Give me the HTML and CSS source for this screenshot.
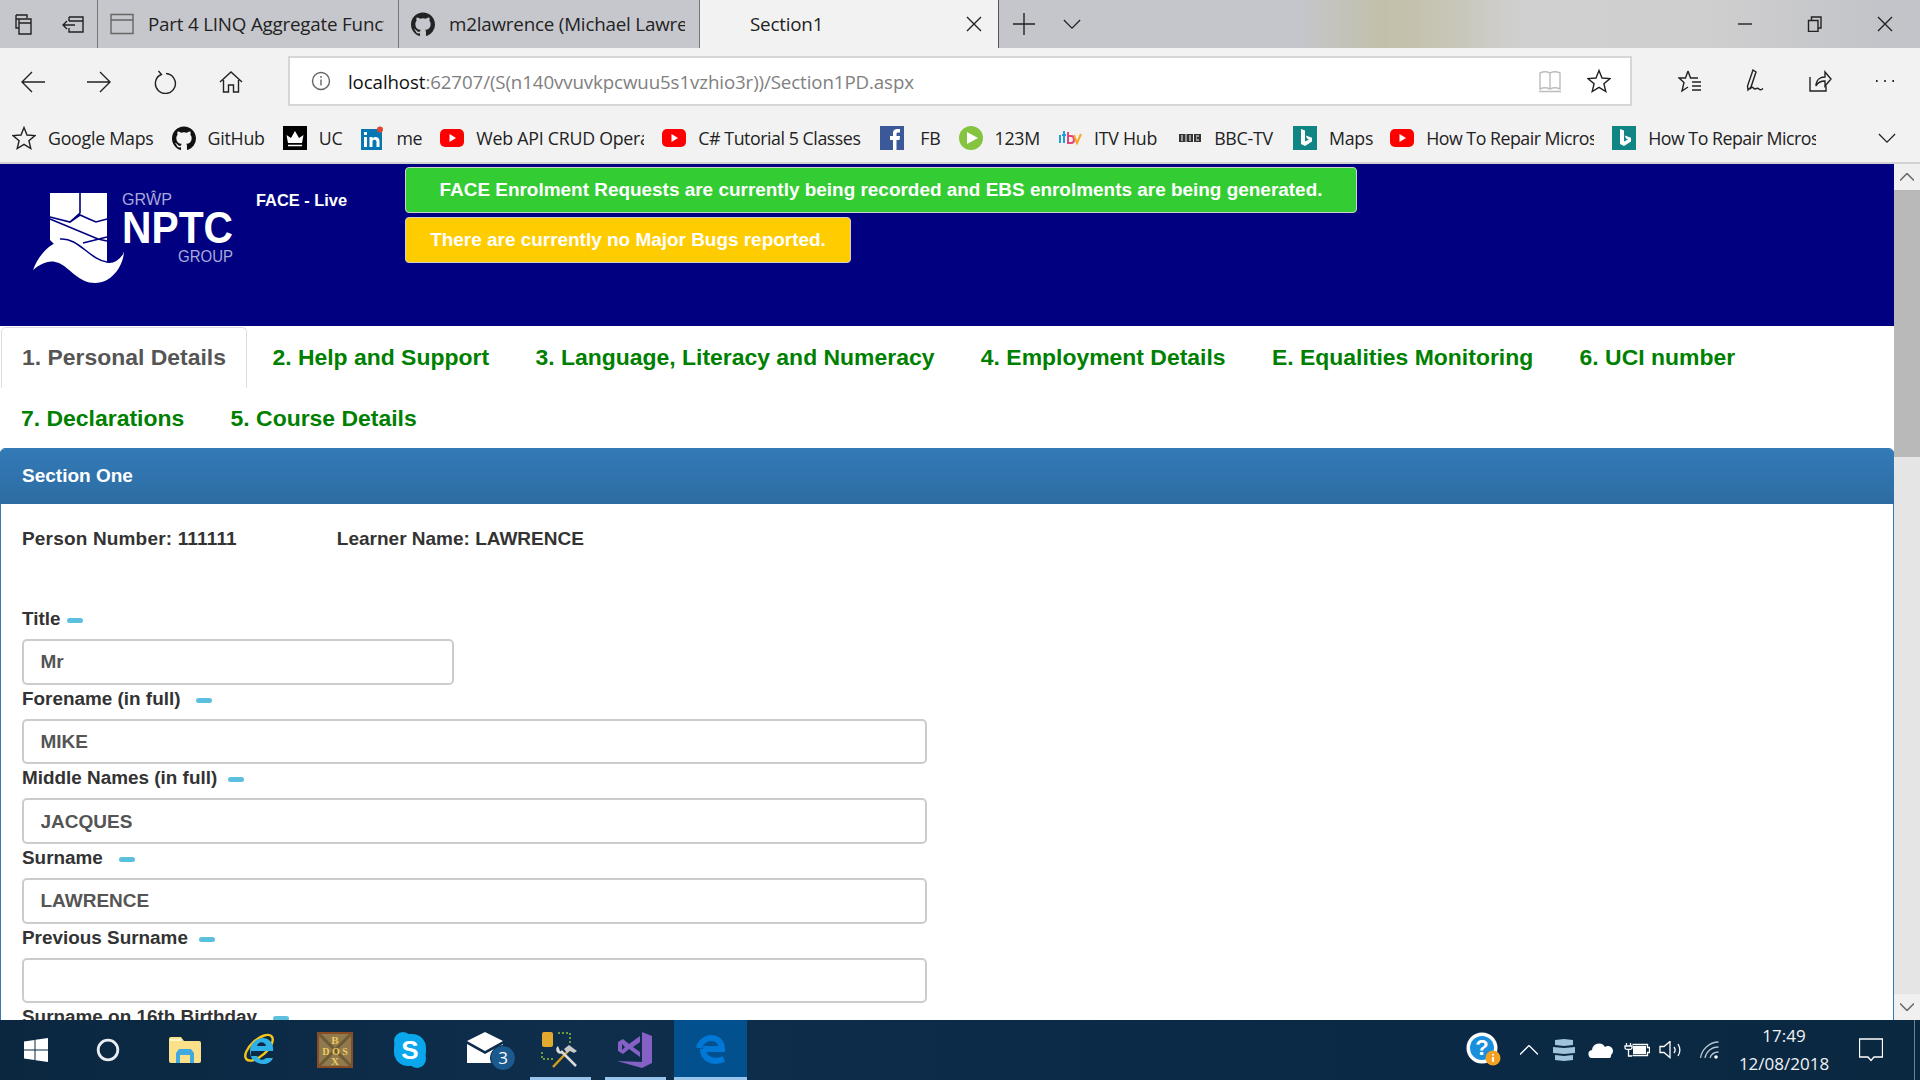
FILE: index.html
```html
<!DOCTYPE html>
<html lang="en">
<head>
<meta charset="utf-8">
<title>Section1</title>
<link rel="stylesheet" href="styles.css">
</head>
<body>
<svg class="defs" width="0" height="0" aria-hidden="true">
  <symbol id="octo" viewBox="0 0 24 24"><path d="M12 .5C5.37.5 0 5.87 0 12.5c0 5.3 3.44 9.8 8.2 11.39.6.11.82-.26.82-.58v-2.03c-3.34.73-4.04-1.61-4.04-1.61-.55-1.39-1.33-1.76-1.33-1.76-1.09-.74.08-.73.08-.73 1.2.09 1.84 1.24 1.84 1.24 1.07 1.83 2.81 1.3 3.49 1 .11-.78.42-1.31.76-1.61-2.67-.3-5.47-1.33-5.47-5.93 0-1.31.47-2.38 1.24-3.22-.14-.3-.54-1.52.1-3.18 0 0 1.01-.32 3.3 1.23a11.5 11.5 0 016 0c2.29-1.55 3.3-1.23 3.3-1.23.64 1.66.24 2.88.12 3.18a4.65 4.65 0 011.23 3.22c0 4.61-2.81 5.63-5.48 5.92.42.36.81 1.1.81 2.22v3.29c0 .32.21.7.82.58A12.01 12.01 0 0024 12.5C24 5.87 18.63.5 12 .5z"/></symbol>
  <symbol id="yt" viewBox="0 0 24 24"><rect x="0" y="3" width="24" height="18" rx="5" fill="#f00"/><path d="M9.500 8v8l6.500-4z" fill="#fff"/></symbol>
  <symbol id="bing" viewBox="0 0 24 24"><rect width="24" height="24" fill="#108583"/><path d="M8 3l4 1.500v11l4-2-2-1-1.200-3 6.200 2.200v3.800L12 20l-4-2z" fill="#fff"/></symbol>
</svg>

<div class="screen">
  <header class="tabbar">
    <div class="tabtools">
      <svg class="ic24" viewBox="0 0 24 24"><path d="M4 3h11v3M4 3v13h3M7 7h12v15H7zM4 7h3M7 11h12" class="ln"/></svg>
      <svg class="ic24" viewBox="0 0 24 24"><path d="M8 5h14v15H8v-4M8 9V5M8 9h14M14 13H2M6 9l-4 4 4 4" class="ln"/></svg>
    </div>
    <div class="btab">
      <svg class="ic24" viewBox="0 0 24 24"><path d="M1 2.500h22v19H1zM1 8h22" class="ln ln-grey"/></svg>
      <span class="tabtxt">Part 4 LINQ Aggregate Function</span>
    </div>
    <div class="btab">
      <svg class="ic24 octo-tab"><use href="#octo"/></svg>
      <span class="tabtxt">m2lawrence (Michael Lawrence)</span>
    </div>
    <div class="btab btab-on">
      <span class="tabtxt">Section1</span>
      <svg class="ic16" viewBox="0 0 16 16"><path d="M1 1l14 14M15 1L1 15" class="ln"/></svg>
    </div>
    <svg class="ic-plus" viewBox="0 0 22 22"><path d="M11 0v22M0 11h22" class="ln"/></svg>
    <svg class="ic-chev" viewBox="0 0 20 12"><path d="M1 1l9 9 9-9" class="ln"/></svg>
    <div class="winbtns">
      <svg class="ic16" viewBox="0 0 16 16"><path d="M1 8h14" class="ln"/></svg>
      <svg class="ic16" viewBox="0 0 16 16"><path d="M1.500 4.500h9.500v11H1.500zM4.500 4.500V1h9.500v11H11" class="ln"/></svg>
      <svg class="ic16" viewBox="0 0 16 16"><path d="M1 1l14 14M15 1L1 15" class="ln"/></svg>
    </div>
  </header>

  <div class="toolbar">
    <nav class="navbtns">
      <svg class="ic24" viewBox="0 0 24 24"><path d="M24 12H1M11 2L1 12l10 10" class="ln"/></svg>
      <svg class="ic24" viewBox="0 0 24 24"><path d="M0 12h23M13 2l10 10-10 10" class="ln"/></svg>
      <svg class="ic24" viewBox="0 0 24 24"><path d="M8 4.500A10 10 0 1 0 13 3.500M5.500 1L8.500 4.500 4 7" class="ln"/></svg>
      <svg class="ic24" viewBox="0 0 24 24"><path d="M1 12L12 2l11 10M4.500 10v12h5v-7h5v7h5V10" class="ln"/></svg>
    </nav>
    <div class="addr">
      <svg class="ic20" viewBox="0 0 20 20"><circle cx="10" cy="10" r="8.500" class="ln ln-grey"/><path d="M10 8.500v6M10 5v2" class="ln ln-grey"/></svg>
      <span class="url"><span class="url-host">localhost</span>:62707/(S(n140vvuvkpcwuu5s1vzhio3r))/Section1PD.aspx</span>
      <svg class="ic24" viewBox="0 0 24 24"><path d="M2 4c3-1.500 7-1.500 10 0 3-1.500 7-1.500 10 0v16c-3-1.500-7-1.500-10 0-3-1.500-7-1.500-10 0zM12 4v16M1 22.500h22" class="ln ln-pale"/></svg>
      <svg class="ic24 star" viewBox="0 0 24 24"><path d="M12 1.500l3 7.500 8 .6-6.100 5.100 1.900 7.800L12 18.300l-6.800 4.200 1.900-7.800L1 9.600l8-.6z" class="ln"/></svg>
    </div>
    <div class="toolsright">
      <svg class="ic24" viewBox="0 0 24 24"><path d="M10 2l2.500 7H20M10 2L7.500 9H1l5 4.500L4 22l6-4M14 13h9M14 17h9M14 21h9" class="ln"/></svg>
      <svg class="ic24" viewBox="0 0 24 24"><path d="M10 1l3 2-5 15-3 3-.5-4zM7 20c3-4 3 0 5 0s2-2 4 0 3 0 4-.5" class="ln"/></svg>
      <svg class="ic24" viewBox="0 0 24 24"><path d="M2 8v14h16v-5M2 22h16M8 17c0-6 4-9 9-9V3l6 7-6 7v-5c-4 0-7 1-9 5z" class="ln"/></svg>
      <svg class="ic24" viewBox="0 0 24 24"><path d="M3 12h1.600M11.200 12h1.600M19.400 12H21" class="ln ln-thick"/></svg>
    </div>
  </div>

  <div class="bookmarks">
    <div class="bm"><svg class="bm-ic" viewBox="0 0 24 24"><path d="M12 1.500l3 7.500 8 .6-6.100 5.100 1.900 7.800L12 18.300l-6.800 4.200 1.900-7.800L1 9.600l8-.6z" class="ln"/></svg><span>Google Maps</span></div>
    <div class="bm"><svg class="bm-ic"><use href="#octo"/></svg><span>GitHub</span></div>
    <div class="bm"><svg class="bm-ic" viewBox="0 0 24 24"><rect width="24" height="24" fill="#000"/><path d="M5 17h14l1.500-8-4.500 3-4-7-4 7-4.500-3z" fill="#fff"/><path d="M5 19.500h14" stroke="#fff" stroke-width="1.500"/></svg><span>UC</span></div>
    <div class="bm"><svg class="bm-ic" viewBox="0 0 24 24"><rect x="1" y="3" width="21" height="21" fill="#0976b4"/><path d="M4 11h3v10H4zM4 6h3v3H4zM9.500 11h3v1.500c2-2.500 7-2 7 2.500v6h-3v-5.500c0-2.500-4-2.500-4 0V21h-3z" fill="#fff"/><circle cx="20" cy="3.500" r="3" fill="#e2452f"/></svg><span>me</span></div>
    <div class="bm"><svg class="bm-ic"><use href="#yt"/></svg><span class="bm-clip">Web API CRUD Operations</span></div>
    <div class="bm"><svg class="bm-ic"><use href="#yt"/></svg><span class="bm-w164">C# Tutorial 5 Classes</span></div>
    <div class="bm"><svg class="bm-ic" viewBox="0 0 24 24"><rect width="24" height="24" fill="#3b5998"/><path d="M13 24V14h-3v-4h3V7c0-3 2-4 4-4h3v3.500h-2c-1 0-1.500.5-1.500 1.500v2H20l-.5 4h-3v10z" fill="#fff"/></svg><span class="bm-fb">FB</span></div>
    <div class="bm"><svg class="bm-ic" viewBox="0 0 24 24"><circle cx="12" cy="12" r="12" fill="#85c441"/><path d="M8 6l11 6-11 6z" fill="#fff"/></svg><span>123M</span></div>
    <div class="bm bm-itv"><svg class="bm-ic" viewBox="0 0 24 24"><path d="M2 9v8M6 5v12M4 9h4" stroke="#1ea2d6" stroke-width="2" fill="none"/><path d="M10 6v11h3c4 0 4-7 0-7h-3" stroke="#e6457a" stroke-width="2" fill="none"/><path d="M16 9l3 8 4-9" stroke="#f7a823" stroke-width="2" fill="none"/></svg><span>ITV Hub</span></div>
    <div class="bm bm-bbc"><svg class="bm-ic" viewBox="0 0 24 24"><path d="M1 8h6.500v8H1zM8.500 8H15v8H8.500zM16 8h7v8h-7z" fill="#333"/><path d="M3 10h2M3 12h2M3 14h2M11 10h2M11 12h2M11 14h2M18 10h3M18 12h1M18 14h3" stroke="#fff" stroke-width="1"/></svg><span>BBC-TV</span></div>
    <div class="bm bm-maps"><svg class="bm-ic"><use href="#bing"/></svg><span>Maps</span></div>
    <div class="bm"><svg class="bm-ic"><use href="#yt"/></svg><span class="bm-clip bm-how">How To Repair Microsoft Surface</span></div>
    <div class="bm"><svg class="bm-ic"><use href="#bing"/></svg><span class="bm-clip bm-how">How To Repair Microsoft Surface</span></div>
    <svg class="ic-chev bm-more" viewBox="0 0 20 12"><path d="M1 1l9 9 9-9" class="ln"/></svg>
  </div>

  <div class="viewport">
    <main class="page">
      <section class="banner">
        <svg class="logo" viewBox="30 188 206 100">
          <path d="M50 193h57v69H72L50 240z" fill="#fff"/>
          <path d="M80 193v20l-10 9 -20-5M70 222l10-7 9 4 7 3 11-3M50 219l48 20 9 2M83 243l24-6" fill="none" stroke="#000080" stroke-width="1.600"/>
          <path d="M33 270c5-14 18-30 34-30 16 0 28 20 40 22 7 1 13-4 17-10-1 14-12 31-29 31-16 0-24-14-36-20-9-4-18 0-26 7z" fill="#fff"/>
          <path d="M60 239c18-2 30 21 47 23 6 1 12-3 16-9" fill="none" stroke="#000080" stroke-width="1.500"/>
          <text x="122" y="205" class="logo-sm" textLength="50" lengthAdjust="spacingAndGlyphs">GRŴP</text>
          <text x="122" y="243" class="logo-big" textLength="111" lengthAdjust="spacingAndGlyphs">NPTC</text>
          <text x="178" y="262" class="logo-sm" textLength="55" lengthAdjust="spacingAndGlyphs">GROUP</text>
        </svg>
        <div class="env">FACE - Live</div>
        <div class="notices">
          <div class="notice notice-green">FACE Enrolment Requests are currently being recorded and EBS enrolments are being generated.</div>
          <div class="notice notice-amber">There are currently no Major Bugs reported.</div>
        </div>
      </section>

      <nav class="tabs">
        <a class="tab tab-on">1. Personal Details</a>
        <a class="tab">2. Help and Support</a>
        <a class="tab">3. Language, Literacy and Numeracy</a>
        <a class="tab">4. Employment Details</a>
        <a class="tab">E. Equalities Monitoring</a>
        <a class="tab">6. UCI number</a>
        <a class="tab">7. Declarations</a>
        <a class="tab">5. Course Details</a>
      </nav>

      <section class="panel">
        <h2 class="panel-head">Section One</h2>
        <div class="panel-body">
          <p class="ident"><span class="ident-1">Person Number: 111111</span><span class="ident-2">Learner Name: LAWRENCE</span></p>
          <div class="field"><label class="lbl">Title<i class="dash dash-s"></i></label><input class="inp inp-short" value="Mr" readonly></div>
          <div class="field"><label class="lbl">Forename (in full)<i class="dash dash-l"></i></label><input class="inp" value="MIKE" readonly></div>
          <div class="field"><label class="lbl">Middle Names (in full)<i class="dash dash-m"></i></label><input class="inp" value="JACQUES" readonly></div>
          <div class="field"><label class="lbl">Surname<i class="dash dash-l"></i></label><input class="inp" value="LAWRENCE" readonly></div>
          <div class="field"><label class="lbl">Previous Surname<i class="dash dash-m"></i></label><input class="inp" value="" readonly></div>
          <div class="field"><label class="lbl">Surname on 16th Birthday<i class="dash dash-l"></i></label><input class="inp" value="" readonly></div>
        </div>
      </section>
    </main>
    <aside class="scroll">
      <div class="sb-btn"><svg class="sb-ic" viewBox="0 0 14 8"><path d="M0 7.500l7-7 7 7" class="ln ln-sb"/></svg></div>
      <div class="sb-thumb"></div>
      <div class="sb-track"></div>
      <div class="sb-btn"><svg class="sb-ic" viewBox="0 0 14 8"><path d="M0 .5l7 7 7-7" class="ln ln-sb"/></svg></div>
    </aside>
  </div>

  <footer class="taskbar">
    <div class="slot slot-first">
      <svg width="24" height="24" viewBox="0 0 24 24"><path d="M0 3.500l10.500-1.500v9.500H0zM11.500 1.800L24 0v11.500H11.500zM0 12.500h10.500V22L0 20.500zM11.500 12.500H24V24l-12.500-1.800z" fill="#fff"/></svg>
    </div>
    <div class="slot slot-cortana">
      <svg width="24" height="24" viewBox="0 0 24 24"><circle cx="12" cy="12" r="9.800" fill="none" stroke="#e8edf2" stroke-width="2.800"/></svg>
    </div>
    <div class="slot">
      <svg width="32" height="26" viewBox="0 0 32 26"><path d="M0 2a2 2 0 012-2h10l3 4h15a2 2 0 012 2v18a2 2 0 01-2 2H2a2 2 0 01-2-2z" fill="#fbe08a"/><path d="M1 2h11v2H1z" fill="#fff6c9"/><path d="M7 26V16l3-4h12l3 4v10h-4v-8H11v8z" fill="#3fa9e0"/></svg>
    </div>
    <div class="slot slot-ie">
      <svg width="36" height="36" viewBox="0 0 36 36"><ellipse cx="18" cy="15" rx="17" ry="8" transform="rotate(-42 18 18)" fill="none" stroke="#f4c51a" stroke-width="2.400"/><path d="M8 19h22c1-8-4-13-10-13S7 11 7 19s6 13 13 13c5 0 8-2 10-6h-7c-3 3-8 2-9-2H8z" fill="#2db1e8"/><path d="M14 14h9c-1-5-8-5-9 0z" fill="#0c2a44"/></svg>
    </div>
    <div class="slot">
      <svg width="36" height="36" viewBox="0 0 36 36"><rect width="36" height="36" fill="#8a4a22"/><rect x="2" y="2" width="32" height="32" fill="#8f7a4f"/><path d="M2 2l32 32M34 2L2 34" stroke="#6f5a34" stroke-width="3"/><text x="18" y="12" class="dos">B</text><text x="18" y="23" class="dos dos-w">D O S</text><text x="18" y="33" class="dos">X</text></svg>
    </div>
    <div class="slot">
      <svg width="34" height="36" viewBox="0 0 34 36"><rect x="1" y="2" width="32" height="32" rx="14" fill="#0aa7ec"/><circle cx="10" cy="9" r="9" fill="#0aa7ec"/><circle cx="24" cy="27" r="9" fill="#0aa7ec"/><text x="17" y="27" class="skype">S</text></svg>
    </div>
    <div class="slot">
      <svg class="mail" width="48" height="36" viewBox="0 0 48 36"><path d="M0 9L18 0l18 9-18 10zM0 12l18 10 18-10v19H0z" fill="#fff"/><circle cx="36" cy="26" r="12.500" fill="#1a5a8f" stroke="#0c2a44"/><text x="36" y="32" class="badge3">3</text></svg>
    </div>
    <div class="slot slot-open">
      <svg width="38" height="38" viewBox="0 0 38 38"><rect x="1" y="1" width="11" height="15" rx="2" fill="#e2a92f"/><path d="M17 2h12v11M1 21v7h11" fill="none" stroke="#6f9a3a" stroke-width="2" stroke-dasharray="2 2"/><path d="M12 36l15-16" stroke="#d99a1e" stroke-width="2.500"/><path d="M23 18l5-4 8 6-3 2-4-2-3 2z" fill="#c9c9c9"/><path d="M35 35L20 20" stroke="#dcdcdc" stroke-width="2.500"/><path d="M17 15a4 4 0 005 7l-3-2z" fill="#dcdcdc"/></svg>
    </div>
    <div class="slot slot-open">
      <svg width="36" height="36" viewBox="0 0 36 36"><path fill-rule="evenodd" d="M25 0l10 4v27l-10 5L0 29l25 1zM1 10l5-3 6 5 11-8v21l-11-8-6 5-5-3zM5 12v6l3-3zM23 10l-7 5 7 5z" fill="#8661c5"/></svg>
    </div>
    <div class="slot slot-active">
      <svg width="30" height="32" viewBox="0 0 30 32"><path d="M7 15h19C26 8 21 4 15 4 9 4 4 9 3 14M7 15c0 9 9 15 21 10" fill="none" stroke="#0078d7" stroke-width="6"/></svg>
    </div>

    <div class="tray">
      <svg class="t-help" width="36" height="36" viewBox="0 0 36 36"><circle cx="16" cy="16" r="15.500" fill="#fff"/><circle cx="16" cy="16" r="12" fill="#1a8fdc"/><text x="16" y="23" class="helpq">?</text><circle cx="27" cy="26" r="7.500" fill="#f2a122"/><path d="M27 25v5M27 22v1.500" stroke="#fff" stroke-width="1.800"/></svg>
      <svg class="t-up" width="18" height="10" viewBox="0 0 18 10"><path d="M0 9.500l9-9 9 9" class="ln-w"/></svg>
      <svg class="t-stack" width="22" height="22" viewBox="0 0 22 22"><path d="M2 1l9-1 9 1v5l-9 1-9-1zM0 8l11 1 11-1v6l-11 1-11-1zM2 16l9 1 9-1v5l-9 1-9-1z" fill="#9fc3d8"/></svg>
      <svg class="t-cloud" width="26" height="16" viewBox="0 0 26 16"><path d="M5 16a4 4 0 01-1-8 7 7 0 0113-3 5 5 0 016 8 3 3 0 01-1 3z" fill="#fff"/></svg>
      <svg class="t-batt" width="26" height="14" viewBox="0 0 26 14"><path d="M8.500 1.500h15v3h2v5h-2v3h-15" class="ln-w"/><rect x="9" y="3" width="13" height="8" fill="#fff"/><path d="M1 3h7v2c0 2-7 2-7 0zM4.500 7v6H8M2.500 0v3M6.500 0v3" class="ln-w"/></svg>
      <svg class="t-vol" width="24" height="18" viewBox="0 0 24 18"><path d="M1 5.500h4l6-5v16l-6-5H1zM15 6c1.500 2 1.500 4 0 6M19 3c2.500 4 2.500 8 0 12" class="ln-w"/></svg>
      <svg class="t-wifi" width="20" height="18" viewBox="0 0 20 18"><path d="M.5 17C1.500 9 9 1 18.500 1M5 17c1-6 6-11 13.500-11M10 17c1-3 4-6 8.500-6" class="ln-w ln-w-dim"/><circle cx="16" cy="16" r="1.800" fill="#fff"/></svg>
      <div class="clock"><span>17:49</span><span>12/08/2018</span></div>
      <svg class="t-note" width="24" height="24" viewBox="0 0 24 24"><path d="M.5 1h23v18H15l-3 3.500L9 19H.5z" class="ln-w"/></svg>
      <div class="showdesk"></div>
    </div>
  </footer>
</div>
</body>
</html>
```
FILE: styles.css
```css
* { box-sizing: border-box; }
html, body { margin: 0; height: 100%; overflow: hidden; background: #fff; }
.defs { display: block; height: 0; }
.screen { width: 1920px; height: 1080px; display: flex; flex-direction: column; font-family: "Liberation Sans", Arial, sans-serif; }

.ln { fill: none; stroke: #222; stroke-width: 1.4; }
.ln-grey { stroke: #666; }
.ln-pale { stroke: #bdbdbd; }
.ln-thick { stroke-width: 2.200; }
.ln-sb { stroke: #666; stroke-width: 1.5; }
.ln-w { fill: none; stroke: #fff; stroke-width: 1.3; }
.ln-w-dim { stroke: #b8c4ce; }

/* browser tabs */
.tabbar {
  height: 48px; flex: none; display: flex; align-items: center;
  background: linear-gradient(90deg, #c5c6cb 0, #c5c6cb 1300px, #c2bfa9 1385px, #c6c4b4 1440px, #d0d0d0 1520px, #cfcfcf 1700px, #c3c4c9 1880px);
  font-family: "Open Sans", sans-serif; color: #222;
}
.tabtools { width: 98px; height: 48px; display: flex; align-items: center; padding-left: 12px; gap: 25px; background: #c6c7cc; border-right: 1px solid #77787c; }
.ic24 { width: 24px; height: 24px; flex: none; }
.ic20 { width: 20px; height: 20px; flex: none; }
.ic16 { width: 16px; height: 16px; flex: none; }
.btab { width: 301px; height: 48px; display: flex; align-items: center; padding: 0 14px 0 12px; gap: 14px; background: #c6c7cc; border-right: 1px solid #77787c; overflow: hidden; flex: none; }
.octo-tab { fill: #222; }
.tabtxt { font-size: 18.800px; letter-spacing: -.2px; white-space: nowrap; overflow: hidden; flex: 1; min-width: 0; }
.btab-on { width: 299px; background: #f2f2f2; padding: 0 16px 0 50px; border-right-color: #555; }
.ic-plus { width: 22px; height: 22px; margin-left: 14px; flex: none; }
.ic-chev { width: 18px; height: 11px; margin-left: 28px; flex: none; }
.winbtns { margin-left: auto; display: flex; gap: 54px; padding-right: 27px; }

/* address bar */
.toolbar { height: 68px; flex: none; background: #f2f2f2; display: flex; align-items: flex-start; }
.navbtns { width: 288px; height: 68px; display: flex; align-items: center; padding-left: 21px; gap: 42px; flex: none; }
.addr { width: 1344px; height: 50px; margin-top: 8px; background: #fff; border: 2px solid #d6d6d6; display: flex; align-items: center; padding-left: 21px; flex: none; }
.url { margin-left: 17px; padding-top: 1px; font-family: "Open Sans", sans-serif; font-size: 18.700px; letter-spacing: -.1px; color: #808080; flex: 1; white-space: nowrap; }
.url-host { color: #111; }
.star { margin: 0 19px 0 25px; }
.toolsright { display: flex; height: 66px; align-items: center; padding-left: 46px; gap: 41px; }

/* favourites */
.bookmarks { height: 48px; flex: none; background: #f2f2f2; border-bottom: 2px solid #d2d2d2; display: flex; align-items: center; padding: 0 0 2px 12px; font-family: "Open Sans", sans-serif; font-size: 17.800px; letter-spacing: -.25px; color: #222; }
.bm { display: flex; align-items: center; margin-right: 18px; white-space: nowrap; flex: none; }
.bm-ic { width: 24px; height: 24px; margin-right: 12px; flex: none; fill: #111; }
.bm-clip { width: 168px; overflow: hidden; }
.bm-w164 { width: 164px; overflow: hidden; letter-spacing: -.45px; }
.bm-how { letter-spacing: -.5px; }
.bm-fb { margin-left: 4px; }
.bm-itv { margin-right: 21px; }
.bm-bbc { margin-right: 20px; }
.bm-maps { margin-right: 17px; }
.ic-chev.bm-more { margin-left: 44px; }

/* page */
.viewport { flex: 1; min-height: 0; display: flex; overflow: hidden; }
.page { width: 1894px; flex: none; overflow: hidden; background: #fff; color: #333; }
.banner { height: 162px; background: #000080; display: flex; align-items: flex-start; }
.logo { width: 206px; height: 100px; margin: 24px 0 0 30px; flex: none; display: block; }
.logo-sm { font: 400 17px "Liberation Sans", sans-serif; fill: #a9a9dc; }
.logo-big { font: 700 44px "Liberation Sans", sans-serif; fill: #fff; }
.env { margin: 26px 0 0 20px; width: 149px; font-size: 16.400px; line-height: 20px; font-weight: 700; color: #fff; flex: none; }
.notices { display: flex; flex-direction: column; gap: 4px; padding-top: 3px; }
.notice { height: 46px; line-height: 44px; border: 1px solid #cfcfcf; border-radius: 4px; color: #fff; font-size: 18.950px; font-weight: 700; text-align: center; white-space: nowrap; }
.notice-green { width: 952px; background: #33cc33; }
.notice-amber { width: 446px; background: #ffcc00; }

.tabs { display: flex; flex-wrap: wrap; padding-top: 1px; }
.tab { height: 61px; padding: 0 21px; margin-right: 4.400px; font-size: 22.950px; line-height: 60px; font-weight: 700; color: #008000; white-space: nowrap; }
.tab-on { margin-left: 1px; padding: 0 20px; color: #555; border: 1px solid #ddd; border-bottom: 0; border-radius: 5px 5px 0 0; line-height: 59px; }

.panel { border: 1px solid #337ab7; border-radius: 5px 5px 0 0; height: 700px; margin-top: -1px; }
.panel-head { margin: 0 -1px; height: 55px; padding: 0 22px; font-size: 19px; line-height: 53px; font-weight: 700; color: #fff; background: linear-gradient(#337ab7, #2d6ca2); border-radius: 5px 5px 0 0; }
.panel-body { padding: 0 21px; }
.ident { margin: 0; padding-top: 21px; height: 101px; font-size: 19px; line-height: 28px; font-weight: 700; color: #333; }
.ident-1 { letter-spacing: .17px; }
.ident-2 { margin-left: 100px; }
.field { height: 79.660px; }
.lbl { display: flex; align-items: center; height: 28px; margin-bottom: 6px; font-size: 18.900px; font-weight: 700; color: #333; white-space: nowrap; }
.dash { width: 16px; height: 5px; border-radius: 3px; background: #5bc0de; display: block; margin-top: 3px; }
.dash-s { margin-left: 6px; }
.dash-m { margin-left: 11px; }
.dash-l { margin-left: 16px; }
.inp { display: block; width: 905px; height: 45.660px; padding: 1px 17px 0 16.500px; border: 2px solid #ccc; border-radius: 5px; font: 700 19px "Liberation Sans", sans-serif; color: #555; background: #fff; outline: 0; }
.inp-short { width: 432px; }

.scroll { width: 26px; flex: none; background: #e5e5e5; display: flex; flex-direction: column; }
.sb-btn { height: 26px; flex: none; display: flex; align-items: center; justify-content: center; background: #f0f0f0; }
.sb-ic { width: 14px; height: 8px; }
.sb-thumb { height: 267px; flex: none; background: #b9b9b9; }
.sb-track { flex: 1; }

/* taskbar */
.taskbar { height: 60px; flex: none; display: flex; background: linear-gradient(90deg, #0b2740, #0e2e4c 30%, #0b2a47 60%, #0a2840); color: #fff; font-family: "Open Sans", sans-serif; }
.slot { width: 75px; height: 60px; flex: none; display: flex; align-items: center; justify-content: center; }
.slot-first { width: 72px; }
.slot-cortana svg { margin-right: 3px; }
.slot-ie svg { margin-left: 2px; }
.slot-open { position: relative; }
.slot-open::after { content: ""; position: absolute; left: 8px; right: 6px; bottom: 0; height: 3px; background: #99c5ec; }
.slot-active { position: relative; width: 73px; margin-left: 2px; background: #03508f; }
.slot-active::after { content: ""; position: absolute; left: 0; right: 0; bottom: 0; height: 3px; background: #99c5ec; }
.mail { margin-left: 12px; overflow: visible; }
.dos { font: 700 11px "Liberation Serif", serif; fill: #f0c95a; text-anchor: middle; }
.dos-w { font-size: 10px; }
.skype { font: 700 26px "Liberation Sans", sans-serif; fill: #fff; text-anchor: middle; }
.badge3 { font: 400 17px "Open Sans", sans-serif; fill: #fff; text-anchor: middle; }
.helpq { font: 700 22px "Liberation Sans", sans-serif; fill: #fff; text-anchor: middle; }

.tray { margin-left: auto; width: 454px; height: 60px; display: flex; align-items: center; }
.t-up { margin-left: 18px; }
.t-stack { margin-left: 15px; }
.t-cloud { margin-left: 13px; }
.t-batt { margin-left: 10px; }
.t-vol { margin-left: 9px; }
.t-wifi { margin-left: 17px; }
.clock { width: 96px; margin-left: 16px; display: flex; flex-direction: column; align-items: center; font-size: 17px; line-height: 28px; color: #f1f4f7; }
.t-note { margin-left: 27px; }
.showdesk { margin-left: 31px; width: 1px; height: 60px; background: #6f8090; flex: none; }
```
